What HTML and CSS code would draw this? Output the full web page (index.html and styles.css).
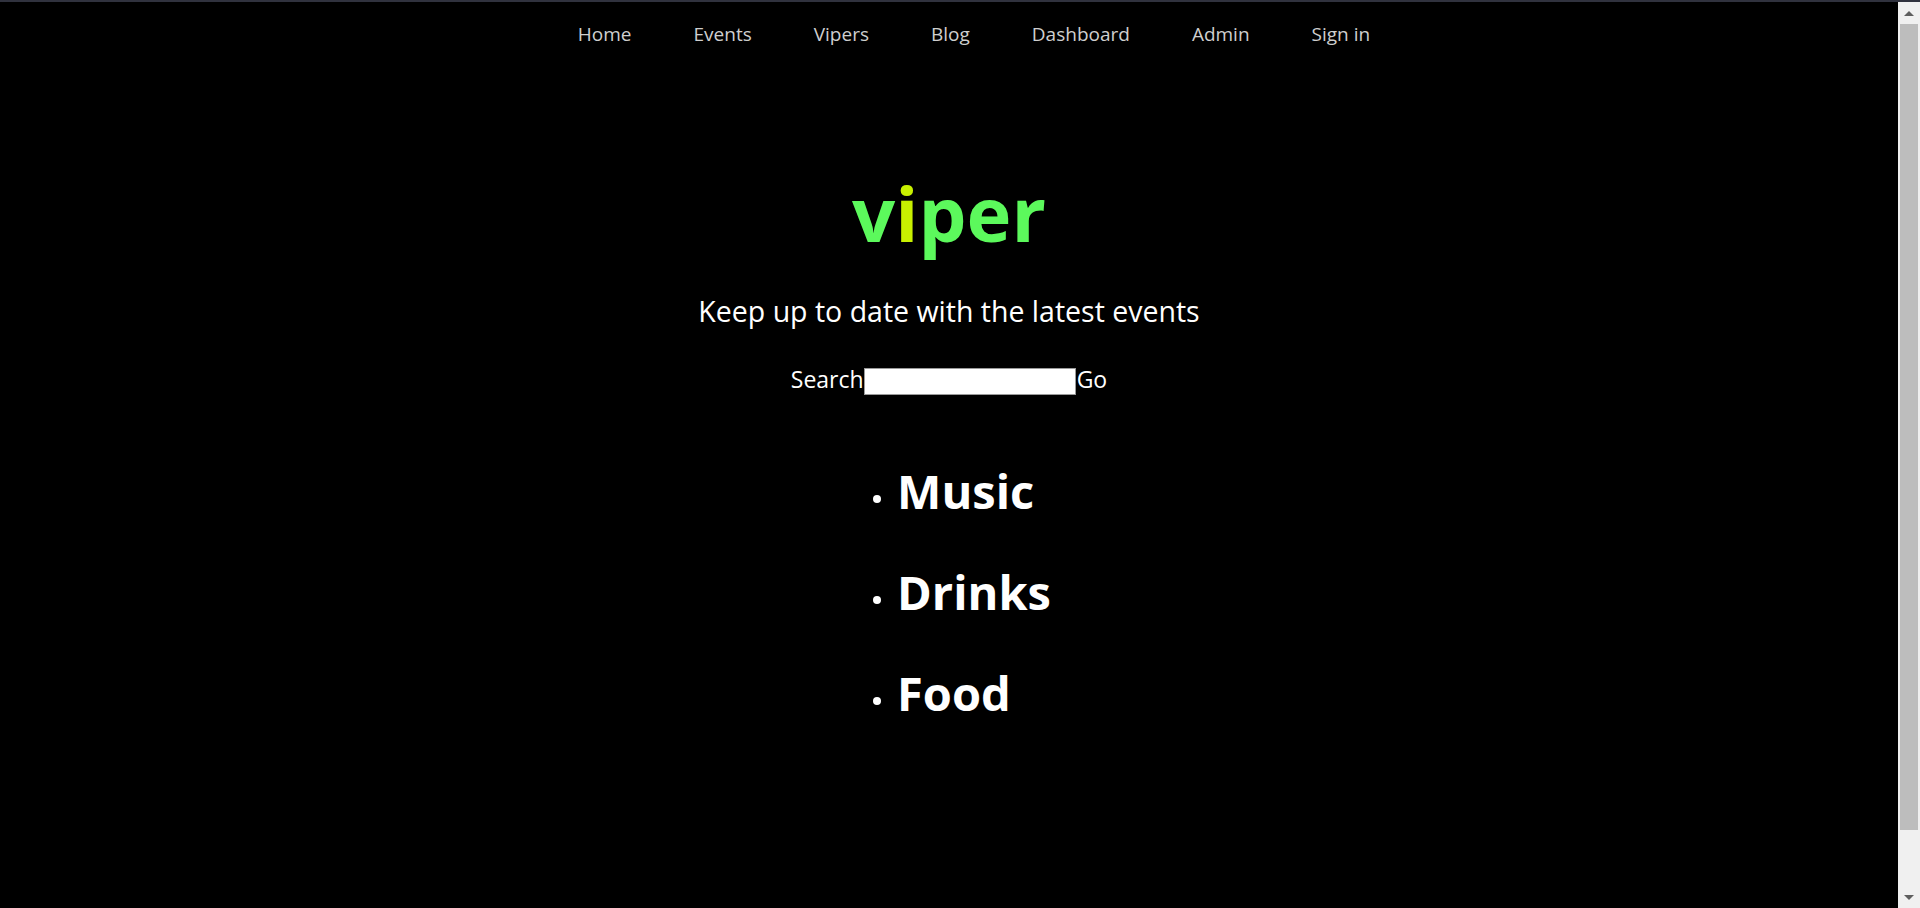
FILE: index.html
```html
<!DOCTYPE html>
<html lang="en">
<head>
<meta charset="utf-8">
<title>viper</title>
<link rel="stylesheet" href="styles.css">
</head>
<body>
  <div class="topline"></div>
  <div class="window">
    <div class="page">
      <nav class="nav">
        <ul class="nav-list">
          <li><a href="#">Home</a></li>
          <li><a href="#">Events</a></li>
          <li><a href="#">Vipers</a></li>
          <li><a href="#">Blog</a></li>
          <li><a href="#">Dashboard</a></li>
          <li><a href="#">Admin</a></li>
          <li><a href="#">Sign in</a></li>
        </ul>
      </nav>
      <main class="hero">
        <h1 class="logo"><span class="logo-g">v</span><span class="logo-y">i</span><span class="logo-g">per</span></h1>
        <p class="tagline">Keep up to date with the latest events</p>
        <form class="search" onsubmit="return false">
          <label class="search-label" for="q">Search</label><input class="search-input" id="q" type="text"><button class="search-btn" type="submit">Go</button>
        </form>
        <ul class="cats">
          <li class="cat">Music</li>
          <li class="cat">Drinks</li>
          <li class="cat">Food</li>
        </ul>
      </main>
    </div>
    <div class="scrollbar">
      <div class="sb-btn"><span class="sb-up"></span></div>
      <div class="sb-thumb"></div>
      <div class="sb-track"></div>
      <div class="sb-btn"><span class="sb-down"></span></div>
    </div>
  </div>
</body>
</html>
```
FILE: styles.css
```css
html, body {
  margin: 0;
  height: 100%;
  background: #000;
  overflow: hidden;
}

body {
  display: flex;
  flex-direction: column;
  font-family: "Open Sans", "Noto Sans", sans-serif;
  color: #fff;
}

.topline {
  height: 2px;
  flex: none;
  background: #30323e;
}

.window {
  flex: 1;
  display: flex;
  min-height: 0;
}

.page {
  flex: 1;
  min-width: 0;
}

/* nav */
.nav-list {
  display: flex;
  justify-content: center;
  gap: 62px;
  margin: 0;
  padding: 17px 0 0 50px;
  list-style: none;
  font-size: 19px;
  line-height: 30px;
}

.nav-list a {
  color: #cfcfcf;
  text-decoration: none;
}

/* hero */
.hero {
  display: flex;
  flex-direction: column;
  align-items: center;
}

.logo {
  margin: 125px 0 0;
  font-size: 76px;
  line-height: 78px;
  font-weight: 700;
}

.logo-g { color: #5cf95c; }
.logo-y { color: #c8f000; }

.tagline {
  margin: 39px 0 0;
  font-size: 28.5px;
  line-height: 40px;
  font-weight: 400;
}

.search {
  margin: 37px 0 0;
  display: flex;
  align-items: center;
  height: 27px;
  font-size: 23px;
  line-height: 27px;
}

.search-label {
  color: #fff;
  padding-bottom: 5px;
}

.search-input {
  width: 212px;
  height: 27px;
  box-sizing: border-box;
  margin: 0;
  padding: 0 4px;
  border: 1px solid #9a9a9a;
  background: #fff;
  font: inherit;
  font-size: 16px;
}

.search-btn {
  margin: 0 0 0 1px;
  padding: 0 0 5px;
  border: 0;
  background: none;
  color: #fff;
  font: inherit;
  line-height: 27px;
}

.cats {
  margin: 73px 0 0;
  padding: 0 0 0 50px;
  list-style: none;
  font-size: 47px;
  line-height: 47px;
  font-weight: 700;
}

.cat {
  display: flex;
}

.cat + .cat {
  margin-top: 54px;
}

.cat::before {
  content: "";
  flex: none;
  width: 8px;
  height: 8px;
  border-radius: 50%;
  background: #fff;
  margin: 27px 16px 0 -24px;
}

/* fake window scrollbar */
.scrollbar {
  width: 22px;
  flex: none;
  display: flex;
  flex-direction: column;
  background: #f0f0f0;
}

.sb-btn {
  height: 22px;
  flex: none;
  display: flex;
  align-items: center;
  justify-content: center;
}

.sb-up {
  width: 0;
  height: 0;
  border-left: 5px solid transparent;
  border-right: 5px solid transparent;
  border-bottom: 5px solid #5e5e5e;
}

.sb-down {
  width: 0;
  height: 0;
  border-left: 5px solid transparent;
  border-right: 5px solid transparent;
  border-top: 5px solid #5e5e5e;
}

.sb-thumb {
  height: 806px;
  margin: 0 2px;
  flex: none;
  background: #bdbdbd;
}

.sb-track {
  flex: 1;
}
```
